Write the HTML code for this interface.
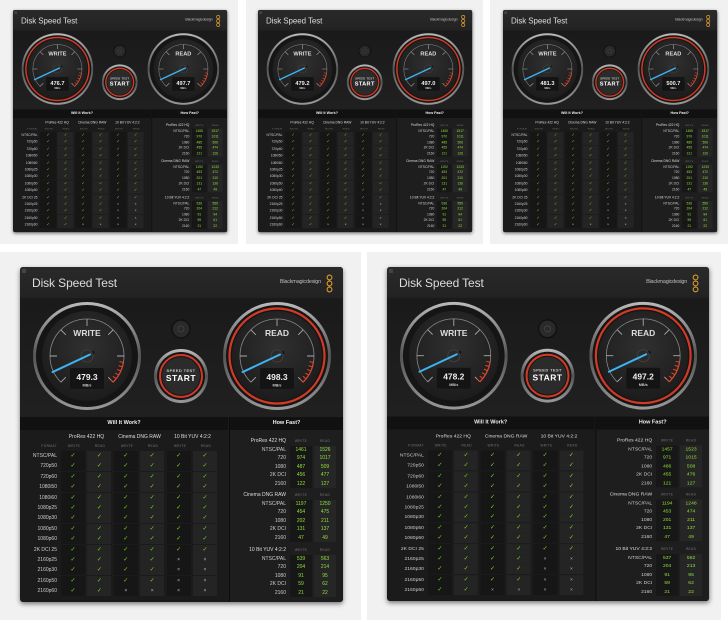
<!DOCTYPE html>
<html><head><meta charset="utf-8">
<style>
body{margin:0;width:728px;height:623px;background:#fff;position:relative;overflow:hidden;font-family:"Liberation Sans",sans-serif}
.card{position:absolute;background:#f1f1f1}
.win{position:absolute;width:323px;height:335px;background:#1b1b1b;transform-origin:0 0;box-shadow:0 2px 5px rgba(0,0,0,.5);border-radius:3px;overflow:hidden}
.tb{position:absolute;left:0;top:0;width:323px;height:31px;background:linear-gradient(#2a2a2a,#222)}
.tb .t{position:absolute;left:12px;top:9px;color:#ddd;font-size:12px;letter-spacing:-.1px}
.tb .b{position:absolute;right:22px;top:12px;color:#bbb;font-size:5.5px;letter-spacing:-.2px}
.tb .x{position:absolute;left:2px;top:2px;width:4px;height:4px;background:#444}
.ga{position:absolute;left:0;top:31px;width:323px;height:119px;background:linear-gradient(#1a1a1a,#202020)}
.hd{position:absolute;top:150px;height:13px;background:#111;color:#eee;font-size:5.5px;font-weight:bold;text-align:center;line-height:13px}
.tx{position:absolute;font-size:5px;color:#ccc;white-space:nowrap}
.sm{font-size:3.2px;color:#777;letter-spacing:.4px}
.cell{position:absolute;width:24px;height:10px}
.ck{color:#7ed321;font-size:6px;text-align:center;line-height:10px}
.xx{color:#bbb;font-size:5px;text-align:center;line-height:10px}
.g{color:#8fe03a;text-align:center}
</style></head><body>
<div class="card" style="left:0;top:0;width:238px;height:244px"></div>
<div class="card" style="left:246px;top:0;width:237px;height:244px"></div>
<div class="card" style="left:490px;top:0;width:238px;height:244px"></div>
<div class="card" style="left:0;top:252px;width:361px;height:368px"></div>
<div class="card" style="left:367px;top:252px;width:354px;height:368px"></div>
<div id="root"></div>
<script>
function gauge(cx,cy,label,val,red){
 let s='';
 s+=`<circle cx="${cx}" cy="${cy}" r="54" fill="url(#bez)"/>`;
 s+=`<circle cx="${cx}" cy="${cy}" r="51" fill="#151515"/>`;
 if(red)s+=`<circle cx="${cx}" cy="${cy}" r="47.5" fill="none" stroke="#d23a26" stroke-width="2.2"/>`;
 s+=`<circle cx="${cx}" cy="${cy}" r="45" fill="url(#face)"/>`;
 const R=37,a0=225,a1=-45;
 function pt(a,r){let t=a*Math.PI/180;return [cx+r*Math.cos(t),cy-r*Math.sin(t)];}
 let p0=pt(a0,R),p1=pt(a1,R);
 s+=`<path d="M${p0[0]} ${p0[1]} A${R} ${R} 0 1 1 ${p1[0]} ${p1[1]}" fill="none" stroke="#888" stroke-width=".8"/>`;
 for(let i=0;i<7;i++){let a=a0-i*45;let q=pt(a,R),w=pt(a,R-7);s+=`<line x1="${q[0]}" y1="${q[1]}" x2="${w[0]}" y2="${w[1]}" stroke="#aaa" stroke-width=".9"/>`}
 let r0=pt(-10,R),r1=pt(-45,R);
 s+=`<path d="M${r0[0]} ${r0[1]} A${R} ${R} 0 0 1 ${r1[0]} ${r1[1]}" fill="none" stroke="#e2452c" stroke-width="1.2"/>`;
 for(let i=0;i<6;i++){let a=-10-i*7;let q=pt(a,R),w=pt(a,R-4);s+=`<line x1="${q[0]}" y1="${q[1]}" x2="${w[0]}" y2="${w[1]}" stroke="#e2452c" stroke-width="1"/>`}
 s+=`<text x="${cx}" y="${cy-20}" fill="#ddd" font-size="8.5" font-weight="bold" text-anchor="middle" font-family="Liberation Sans">${label}</text>`;
 s+=`<rect x="${cx-17}" y="${cy+12}" width="34" height="21" rx="2" fill="#141414"/>`;
 s+=`<text x="${cx}" y="${cy+24}" fill="#eee" font-size="8.5" font-weight="bold" text-anchor="middle" font-family="Liberation Sans">${val}</text>`;
 s+=`<text x="${cx}" y="${cy+30.5}" fill="#ccc" font-size="3.8" font-weight="bold" text-anchor="middle" font-family="Liberation Sans">MB/s</text>`;
 let n=pt(205,38);
 s+=`<line x1="${cx+7}" y1="${cy-4}" x2="${cx+3}" y2="${cy-1.5}" stroke="#111" stroke-width="3"/>`;
 s+=`<circle cx="${cx}" cy="${cy}" r="6" fill="#2a2a2a" stroke="#444" stroke-width=".8"/>`;
 s+=`<line x1="${cx+3}" y1="${cy-1.5}" x2="${n[0]}" y2="${n[1]}" stroke="#3db4f2" stroke-width="2" stroke-linecap="round"/>`;
 return s;
}
function win(x,y,sc,w,r,redW,redR,hf){
 let h=`<div class="win" style="left:${x}px;top:${y}px;transform:scale(${sc})">`;
 h+=`<div class="tb"><div class="x"></div><div class="t">Disk Speed Test</div><div class="b">Blackmagicdesign</div>
 <svg style="position:absolute;right:10px;top:7px" width="7" height="19"><circle cx="3.5" cy="3.5" r="2.4" fill="none" stroke="#d89a2b" stroke-width="1.1"/><circle cx="3.5" cy="9.5" r="2.4" fill="none" stroke="#d89a2b" stroke-width="1.1"/><circle cx="3.5" cy="15.5" r="2.4" fill="none" stroke="#d89a2b" stroke-width="1.1"/></svg></div>`;
 h+=`<div class="ga"></div>`;
 h+=`<svg style="position:absolute;left:0;top:0" width="323" height="160"><defs>
 <linearGradient id="bez" x1="0" y1="0" x2="0" y2="1"><stop offset="0" stop-color="#bbb"/><stop offset=".5" stop-color="#555"/><stop offset="1" stop-color="#999"/></linearGradient>
 <radialGradient id="face" cx=".5" cy=".4" r=".6"><stop offset="0" stop-color="#303030"/><stop offset="1" stop-color="#1c1c1c"/></radialGradient></defs>`;
 h+=gauge(67,89,'WRITE',w,redW)+gauge(257,89,'READ',r,redR);
 h+=`<circle cx="161" cy="62" r="9" fill="#2a2a2a" stroke="#111" stroke-width="1.5"/><circle cx="161" cy="62" r="3" fill="none" stroke="#444" stroke-width=".8"/>`;
 h+=`<circle cx="161" cy="109" r="27" fill="url(#bez)"/><circle cx="161" cy="109" r="24" fill="#151515"/><circle cx="161" cy="109" r="21" fill="none" stroke="#d23a26" stroke-width="2"/><circle cx="161" cy="109" r="19" fill="#2b2b2b"/>`;
 h+=`<text x="161" y="105" fill="#ccc" font-size="4" font-weight="bold" text-anchor="middle" font-family="Liberation Sans" letter-spacing=".4">SPEED TEST</text><text x="161" y="114" fill="#fff" font-size="8.5" font-weight="bold" text-anchor="middle" font-family="Liberation Sans" letter-spacing=".5">START</text></svg>`;
 h+=`<div class="hd" style="left:0;width:208px">Will It Work?</div><div class="hd" style="left:210px;width:113px">How Fast?</div>`;
 h+=`<div style="position:absolute;left:209px;top:150px;width:1px;height:185px;background:#0c0c0c"></div>`;
 h+=`<div style="position:absolute;left:210px;top:163px;width:113px;height:172px;background:#1e1e1e"></div>`;
 const cods=['ProRes 422 HQ','Cinema DNG RAW','10 Bit YUV 4:2:2'];
 cods.forEach((c,i)=>{h+=`<div class="tx" style="left:${40+i*53}px;width:53px;top:167px;text-align:center;color:#ddd">${c}</div>`;
  h+=`<div class="tx sm" style="left:${41+i*53}px;width:26px;top:177px;text-align:center">WRITE</div><div class="tx sm" style="left:${67+i*53}px;width:26px;top:177px;text-align:center">READ</div>`});
 h+=`<div class="tx sm" style="left:0;width:37px;top:177px;text-align:right">FORMAT</div>`;
 const fm=['NTSC/PAL','720p50','720p60','1080i50','1080i60','1080p25','1080p30','1080p50','1080p60','2K DCI 25','2160p25','2160p30','2160p50','2160p60'];
 fm.forEach((f,i)=>{let ty=184+i*10.4;h+=`<div class="tx" style="left:0;width:37px;top:${ty+2}px;text-align:right">${f}</div>`;
  for(let c=0;c<6;c++){let ok=!((i>=10&&c>=4)||(i==13&&c>=2));
   h+=`<div class="cell ${ok?'ck':'xx'}" style="left:${41+c*26.4}px;top:${ty}px;background:${c%2?'#242424':'#161616'}">${ok?'✓':'×'}</div>`}});
 const secs=[['ProRes 422 HQ',171],['Cinema DNG RAW',225],['10 Bit YUV 4:2:2',280]];
 const lb=['NTSC/PAL','720','1080','2K DCI','2160'];
 secs.forEach((s,k)=>{h+=`<div class="tx" style="left:210px;width:56px;top:${s[1]}px;text-align:right;color:#ddd">${s[0]}</div>`;
  h+=`<div class="tx sm" style="left:270px;width:22px;top:${s[1]+1}px;text-align:center">WRITE</div><div class="tx sm" style="left:294px;width:22px;top:${s[1]+1}px;text-align:center">READ</div>`;
  for(let i=0;i<5;i++){let ty=s[1]+8.5+i*8.5;h+=`<div class="tx" style="left:210px;width:56px;top:${ty}px;text-align:right">${lb[i]}</div>`;
   h+=`<div class="tx g" style="left:270px;width:22px;top:${ty-1}px;height:8.5px;background:#171717;line-height:9px">${hf[k][i][0]}</div><div class="tx g" style="left:294px;width:22px;top:${ty-1}px;height:8.5px;background:#262626;line-height:9px">${hf[k][i][1]}</div>`}});
 h+='</div>';return h;
}
const A=[[[1461,1526],[974,1017],[487,509],[456,477],[122,127]],[[1197,1250],[454,475],[202,211],[131,137],[47,49]],[[539,563],[204,214],[91,95],[59,62],[21,22]]];
const B=[[[1457,1523],[971,1015],[486,508],[455,476],[121,127]],[[1194,1248],[453,474],[201,211],[131,137],[47,49]],[[537,562],[204,213],[91,95],[59,62],[21,22]]];
const S=[[[1455,1517],[970,1011],[485,506],[455,474],[121,126]],[[1192,1243],[453,472],[201,210],[131,136],[47,49]],[[536,559],[204,212],[91,94],[59,61],[21,22]]];
let o='';const sc=0.663;
o+=win(13,10,sc,'476.7','497.7',true,false,S);
o+=win(258,10,sc,'479.2','497.0',false,true,S);
o+=win(503,10,sc,'481.3','500.7',false,true,S);
o+=win(20,267,1,'479.3','498.3',false,true,A);
o+=win(387,267,0.997,'478.2','497.2',false,true,B);
document.getElementById('root').innerHTML=o;
</script>
</body></html>
